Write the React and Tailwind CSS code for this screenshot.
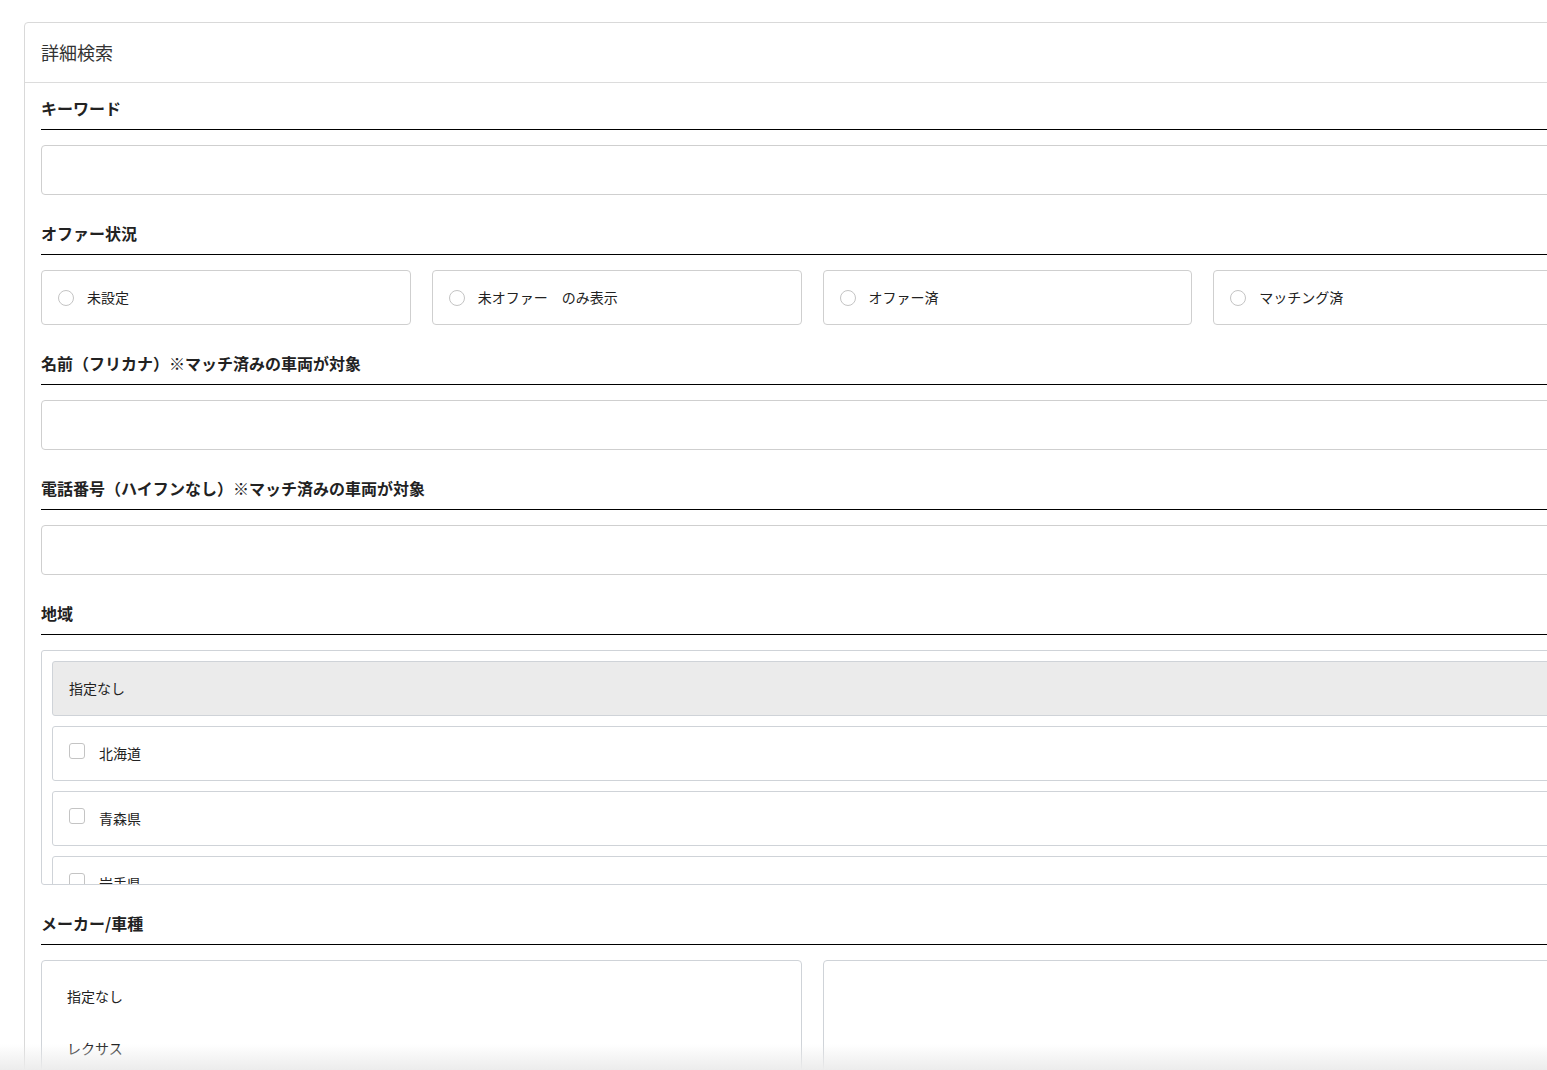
import React from "react";

const FONT = { fontFamily: '"Noto Sans CJK JP", "Noto Sans", sans-serif' };

function Label({ children, first }) {
  return (
    <div
      className={`${first ? "" : "mt-[27px]"} text-[16px] font-bold leading-[22px] text-[#222] pb-[10px] border-b border-black whitespace-nowrap`}
    >
      {children}
    </div>
  );
}

function TextInput() {
  return <div className="mt-[15px] h-[50px] border border-[#cfcfcf] rounded-[4px] bg-white" />;
}

function Radio({ label }) {
  return (
    <div className="h-[55px] border border-[#cfcfcf] rounded-[4px] flex items-center px-[16px] gap-[13px]">
      <span className="w-[16px] h-[16px] rounded-full border border-[#c4c4c4] bg-white shrink-0" />
      <span className="text-[14px] text-[#222] whitespace-pre">{label}</span>
    </div>
  );
}

function CheckItem({ label }) {
  return (
    <div className="h-[55px] shrink-0 border border-[#cfd3d8] rounded-[3px] flex items-center px-[16px] gap-[14px] bg-white">
      <span className="w-[16px] h-[16px] rounded-[3px] border border-[#c4c4c4] bg-white shrink-0 -mt-[6px]" />
      <span className="text-[14px] text-[#222]">{label}</span>
    </div>
  );
}

export default function App() {
  return (
    <div style={FONT} className="relative w-[1547px] h-[1070px] overflow-hidden bg-white">
      <div className="ml-[24px] mt-[22px] w-[1576px] border border-[#d9d9d9] rounded-[4px] bg-white">
        <div className="h-[60px] flex items-center px-[16px] border-b border-[#dcdcdc]">
          <span className="text-[18px] text-[#333]">詳細検索</span>
        </div>
        <div className="px-[16px] pt-[14px] pb-[40px]">
          <Label first>キーワード</Label>
          <TextInput />

          <Label>オファー状況</Label>
          <div className="mt-[15px] grid grid-cols-4 gap-[21px]">
            <Radio label="未設定" />
            <Radio label="未オファー　のみ表示" />
            <Radio label="オファー済" />
            <Radio label="マッチング済" />
          </div>

          <Label>名前（フリカナ）※マッチ済みの車両が対象</Label>
          <TextInput />

          <Label>電話番号（ハイフンなし）※マッチ済みの車両が対象</Label>
          <TextInput />

          <Label>地域</Label>
          <div className="mt-[15px] h-[235px] border border-[#cfd3d8] rounded-[3px] overflow-hidden p-[10px] flex flex-col gap-[10px]">
            <div className="h-[55px] shrink-0 border border-[#cfd3d8] rounded-[3px] bg-[#ebebeb] flex items-center px-[16px]">
              <span className="text-[14px] text-[#222]">指定なし</span>
            </div>
            <CheckItem label="北海道" />
            <CheckItem label="青森県" />
            <CheckItem label="岩手県" />
          </div>

          <Label>メーカー/車種</Label>
          <div className="mt-[15px] grid grid-cols-2 gap-[21px]">
            <div className="h-[200px] border border-[#cfd3d8] rounded-[4px] pt-[9px]">
              <div className="h-[52px] flex items-center px-[25px] text-[14px] text-[#222]">指定なし</div>
              <div className="h-[52px] flex items-center px-[25px] text-[14px] text-[#222]">レクサス</div>
            </div>
            <div className="h-[200px] border border-[#cfd3d8] rounded-[4px]" />
          </div>
        </div>
      </div>
      <div className="absolute left-0 right-0 bottom-0 h-[26px] bg-linear-to-b from-[#ffffff00] to-[#ececec] pointer-events-none" />
    </div>
  );
}
